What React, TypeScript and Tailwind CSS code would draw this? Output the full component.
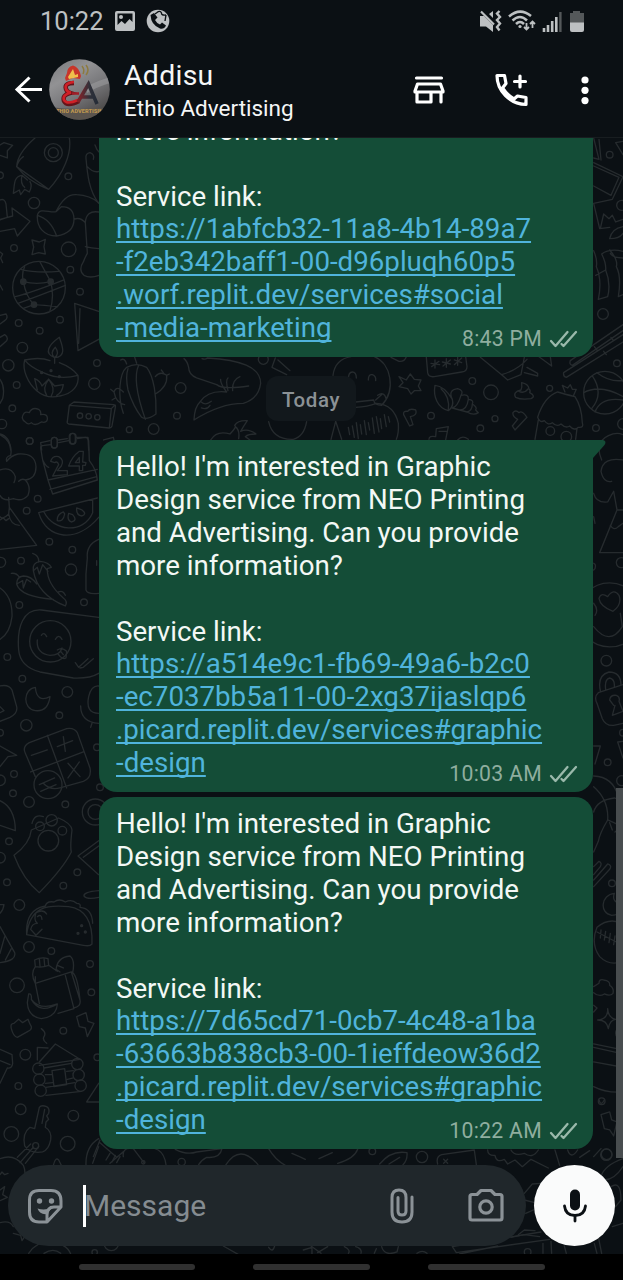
import React from "react";

function Wallpaper() {
  return (
    <svg
      className="pointer-events-none absolute inset-0"
      width="623"
      height="1116"
      viewBox="0 138 623 1116"
      fill="none"
      stroke="#262b2e"
      strokeWidth="4"
      strokeLinecap="round"
      strokeLinejoin="round"
      aria-hidden="true"
    >
      {/* upper left */}
      <g transform="translate(0 130) scale(.3333)">
        <path d="M0 45L12 38L38 46L22 62V84L0 76M50 110Q52 70 105 24M208 24C216 70 190 130 146 178Q85 155 50 110L146 178M50 110Q55 90 70 80" />
        <circle cx="160" cy="68" r="27" /><circle cx="160" cy="68" r="15" />
        <path d="M66 136C40 140 44 165 40 190L58 180L62 194L74 178L88 186Q98 168 90 155M66 136Q60 160 74 172M66 136L82 150" />
        <path d="M296 220C266 180 262 130 258 85Q256 70 270 68Q285 74 280 88M285 45Q290 60 297 66M262 110Q280 130 297 124" />
        <circle cx="205" cy="139" r="10" /><circle cx="102" cy="219" r="17" /><circle cx="0" cy="136" r="10" />
        <path d="M0 210Q14 204 18 222L22 262L0 270M38 258L36 234L90 274L52 318L44 296L0 304M38 258L0 268" />
        <path d="M168 245Q195 190 230 194Q270 196 296 218M112 256C118 230 150 250 168 245L184 230Q222 230 222 268Q222 310 170 318C130 318 110 290 112 256ZM112 256C140 264 160 290 170 318M222 268Q240 260 256 278M296 246Q258 240 256 278L262 370Q254 384 250 396Q234 420 252 436Q270 446 297 436M256 350Q274 354 296 356" />
        <path d="M96 330L118 336L136 328L132 350L136 372L116 368L96 374L101 351Z" />
        <circle cx="42" cy="354" r="10" /><circle cx="206" cy="358" r="22" /><circle cx="211" cy="419" r="10" /><circle cx="240" cy="485" r="10" />
        <circle cx="117" cy="473" r="79" />
        <path d="M62 418Q110 430 176 424M46 500Q90 490 192 450M54 520Q110 500 196 466M70 455Q110 465 152 455L120 396M70 455Q64 430 74 410M70 455Q78 500 102 524L70 535M102 524Q130 526 172 530M152 455Q164 500 150 542M0 366L8 372L2 384L8 398M0 465L8 480" />
        <circle cx="70" cy="455" r="8" fill="#262b2e" /><circle cx="152" cy="455" r="8" fill="#262b2e" /><circle cx="102" cy="524" r="8" fill="#262b2e" />
        <path d="M224 520L296 544M224 520L234 662L296 628M240 536L236 640M0 556L18 552Q26 564 14 572L0 582M0 622L14 614Q26 622 20 632L0 650" />
        <circle cx="56" cy="579" r="10" /><circle cx="119" cy="602" r="10" /><circle cx="180" cy="569" r="10" /><circle cx="67" cy="653" r="16" /><circle cx="25" cy="706" r="17" /><circle cx="291" cy="699" r="10" /><circle cx="283" cy="761" r="17" /><circle cx="50" cy="765" r="10" /><circle cx="37" cy="835" r="10" /><circle cx="6" cy="882" r="14" />
        <path d="M164 683C130 670 146 645 178 622C186 645 202 680 164 683ZM164 683Q148 670 166 652Q180 670 164 683M164 683V700M74 690Q120 680 150 692M178 698Q215 712 234 736M74 690C66 720 84 760 110 782Q140 808 180 798C220 790 238 766 234 736Q180 752 130 728Q90 712 74 690M104 746Q120 752 126 768L146 748L164 768L190 764Q186 790 170 796M104 746L112 780M146 748Q126 774 140 796M146 748Q168 776 154 798" />
        <circle cx="125" cy="728" r="3" fill="#262b2e" /><circle cx="153" cy="722" r="3" fill="#262b2e" /><circle cx="178" cy="740" r="3" fill="#262b2e" />
        <path d="M208 826L222 816L342 824Q348 824 346 832L336 888Q334 894 328 894L206 882Q200 880 202 874ZM208 826L334 836L328 894M334 836L344 826" />
        <circle cx="240" cy="857" r="8" /><circle cx="266" cy="859" r="8" /><circle cx="292" cy="862" r="8" />
        <path d="M76 876Q60 866 72 850Q78 844 88 848Q96 830 116 838Q124 844 122 854Q144 850 142 868Q140 880 124 876Q104 890 94 878Q86 886 76 876M0 748Q16 770 8 806L0 820M0 912Q30 920 32 960" />
        <circle cx="89" cy="933" r="10" />
        <path d="M370 850C352 800 358 730 380 712Q410 696 440 712C462 740 470 800 468 852Q440 872 425 862Q400 830 384 780Q376 740 384 716M436 868C412 800 400 740 416 706M362 690Q374 682 380 702M404 682L410 700M466 740Q480 722 500 736Q504 770 466 792M500 736L508 732M490 728L484 720M370 786Q350 764 342 786Q348 820 374 824M342 786L332 778M346 804L336 810" />
        <circle cx="542" cy="774" r="16" /><circle cx="531" cy="857" r="10" /><circle cx="461" cy="897" r="16" /><circle cx="388" cy="899" r="9" /><circle cx="790" cy="688" r="15" />
        <path d="M552 686Q562 694 566 712Q566 734 590 744L650 764Q670 780 746 768M606 686Q616 690 622 684C720 690 782 710 782 760Q776 806 730 820Q660 820 582 870Q584 830 600 816Q624 780 680 786Q660 760 662 748M684 782Q676 750 684 744M698 782Q696 750 720 740M604 816Q616 828 634 814M604 834Q622 840 630 826M826 684L816 712L860 734M834 690L870 722" />
        <path d="M806 875Q818 930 880 928Q912 920 920 875M632 930Q650 900 690 912Q712 890 704 886Q714 870 742 872Q730 890 722 904Q744 894 768 912Q744 912 736 920L750 930M706 890Q720 900 716 926" />
        <path d="M125 960L122 938L150 932M176 930L202 926M228 922L264 922L266 960M311 930L340 922L342 930" />
        <rect x="154" y="922" width="18" height="32" rx="9" /><rect x="208" y="910" width="18" height="32" rx="9" />
      </g>

      {/* gap between the first two messages, right part */}
      <g transform="translate(311 320) scale(.3333)">
        <path d="M66 166Q72 118 120 110M190 110C240 130 256 210 212 256Q190 256 188 240L134 246M200 226Q220 212 226 238M194 240L214 222M112 178Q112 156 124 156Q136 156 136 174M172 180Q172 162 184 164Q196 168 194 182M134 262Q170 260 196 250Q250 254 262 310Q264 340 256 358M60 358L74 304L92 358" />
        <path d="M112 322L116 344M124 318L130 352M136 308L142 356M148 314L152 342M160 302L166 344M172 308L176 330M184 294L190 340M196 290L204 336M208 296L212 326M220 284L226 320M232 290L236 306" />
        <path d="M264 170L286 180L298 162L310 178L330 180L322 198L330 212L310 212L300 222L290 206L264 200L276 188ZM240 112L264 124Q280 126 286 110" />
        <path d="M346 112L350 158Q352 172 370 170L452 156Q468 154 468 140L464 110M360 130L386 134M372 120V144M362 140L384 124M394 126L418 132M406 116V142M396 138L418 120M430 120L452 128M440 112V136M430 134L452 114" />
        <path d="M508 112L572 164L590 180L630 164L640 112M572 164Q620 150 648 118M648 142L680 160V168L640 158M684 110L722 138L718 110" />
        <circle cx="484" cy="183" r="10" /><circle cx="540" cy="217" r="22" /><circle cx="716" cy="205" r="9" /><circle cx="360" cy="287" r="10" /><circle cx="552" cy="296" r="9" /><circle cx="508" cy="325" r="10" /><circle cx="855" cy="324" r="10" /><circle cx="918" cy="130" r="10" />
        <path d="M614 232Q604 216 630 210Q634 202 632 188Q652 192 654 206Q660 212 656 218Q676 228 660 236Q630 240 614 232M624 214Q640 222 652 206" />
        <path d="M372 196C366 230 380 264 412 272Q430 258 424 238Q400 198 372 196ZM390 206Q418 230 412 272M424 238Q410 210 440 206Q460 212 450 226Q440 260 424 264M450 226Q474 220 472 238Q468 270 446 270M472 238Q490 240 484 252Q484 272 468 276M484 252Q500 262 494 270L502 278Q488 288 468 276L446 270L424 264" />
        <path d="M278 284Q276 272 290 274Q296 264 314 270Q320 286 298 290L306 314L296 318ZM606 278Q614 268 624 278Q634 270 648 292L612 330L604 318L620 298Q604 290 606 278M376 326L412 320L404 360M384 334L406 334M376 326L374 350Q354 346 354 358M440 360Q454 344 472 358" />
        <path d="M740 216Q700 230 680 292Q686 310 700 302Q712 318 724 308Q736 322 750 312Q764 326 776 318Q790 334 802 322Q820 324 814 308Q812 260 792 230M740 216Q760 222 792 230M762 216L754 196L770 204L778 194L784 208L796 208L788 226M682 300L672 358M798 326L794 358" />
        <circle cx="718" cy="333" r="13" /><circle cx="766" cy="350" r="16" />
        <path d="M778 122L936 14M784 136L936 32M758 158L936 44M766 172L936 66M778 122Q774 134 784 136M758 158Q756 170 766 172M850 80L858 90M878 94L886 104M900 52L908 62" />
        <circle cx="882" cy="218" r="64" /><path d="M844 168Q880 220 842 266M818 218Q870 190 944 234M858 158Q900 190 944 180M852 276Q870 230 936 240" />
      </g>

      {/* right edge, upper */}
      <g transform="translate(573 130) scale(.3333)">
        <path d="M62 24L78 88L62 84M78 28L84 90M62 98L150 140L118 208L62 220M62 168L114 196L138 142L62 108M150 34L128 38L150 74M62 220L80 296L110 292M82 296L92 252L108 266L118 256L128 276L150 268M110 326Q116 296 150 290M110 326Q140 326 150 310M86 372Q110 354 150 364M62 362Q74 390 70 410Q88 450 76 508L104 500Q114 460 98 420Q100 400 86 372M98 420L68 436M110 360Q136 390 130 410Q146 440 136 500L150 494M150 384Q120 384 112 370" />
        <circle cx="110" cy="74" r="10" /><circle cx="146" cy="226" r="15" /><circle cx="90" cy="552" r="16" /><circle cx="150" cy="882" r="16" />
        <path d="M86 990Q60 930 120 912Q136 908 150 914M150 990Q90 980 84 1024Q92 1060 116 1054M62 1090Q70 1120 104 1116L122 1084L132 1140H150M132 1140L80 1268H150M112 1186Q122 1204 136 1190L150 1180M62 1160L66 1180M62 1300Q70 1302 66 1316L62 1320" />
        <circle cx="110" cy="1455" r="96" /><path d="M62 1420Q78 1440 66 1456M120 1444Q82 1430 78 1406Q82 1386 104 1400Q122 1374 138 1396Q148 1424 120 1444M62 1490Q110 1550 148 1490L142 1450" /><circle cx="145" cy="1298" r="15" />
      </g>

      {/* right edge, lower */}
      <g transform="translate(573 640) scale(.3333)">
        <circle cx="100" cy="62" r="16" /><circle cx="150" cy="278" r="10" /><circle cx="104" cy="367" r="10" /><circle cx="146" cy="422" r="15" /><circle cx="117" cy="730" r="10" /><circle cx="86" cy="1384" r="10" /><circle cx="101" cy="1543" r="16" /><circle cx="146" cy="652" r="15" /><circle cx="146" cy="1180" r="18" />
        <path d="M82 152Q72 106 108 96Q144 96 144 136M98 148Q94 118 110 114Q126 118 124 140M76 158L150 134M76 158Q62 170 72 190L88 236Q98 258 122 256L150 250M122 196L110 180Q112 164 130 166Q142 170 138 184L150 214L118 226L126 196M62 318H82L66 372M150 304L134 306L150 354M62 408Q120 410 136 470M62 440Q108 480 104 540L150 560M104 540Q80 580 76 604L62 636M62 516Q72 480 124 474L150 484M110 548L118 570M126 550L150 556L126 576M62 680L78 664Q88 668 82 680L62 704M62 720L104 672Q118 676 110 688L62 740M124 760C84 764 78 820 116 826Q140 826 150 804M124 760Q114 790 150 790" />
        <path d="M72 862Q110 830 150 852M72 862Q52 910 80 950Q110 980 150 964M72 876L130 906M84 870L82 894M98 874L94 900M112 880L108 908M126 888L122 914M150 890L136 950M62 1040L78 1030Q78 1016 92 1020Q112 1022 110 1036Q124 1044 120 1060Q112 1070 94 1062Q78 1072 62 1058M62 1096L72 1104L62 1116M104 1106Q106 1138 74 1140Q102 1140 106 1166Q110 1140 128 1138Q106 1134 104 1106M62 1212L150 1230M62 1222L150 1242M62 1266L150 1282M62 1340Q100 1360 150 1356M84 1424L110 1416L116 1440L132 1446L122 1488L110 1470L94 1466ZM62 1550L84 1526" />
      </g>

      {/* left edge, middle */}
      <g transform="translate(0 430) scale(.3333)">
        <path d="M0 14Q40 36 32 76Q16 80 20 94Q34 76 54 72Q106 68 108 110Q108 146 76 150Q94 170 84 196Q66 216 40 206Q10 216 0 196M0 120Q34 108 46 140Q46 150 42 158M76 150Q66 144 56 154M26 202L28 232L110 346L0 358M28 232L26 252Q8 270 0 260M26 252Q32 286 58 286M0 270L10 264L18 272L26 266" />
        <path d="M128 90L122 54Q122 46 132 46L152 44M176 38L206 32M232 26L256 22Q264 22 266 32L268 92Q290 120 292 150L158 192L144 150L292 118M128 90L144 150M150 178L290 140M128 90Q138 110 146 112" />
        <rect x="154" y="22" width="18" height="32" rx="9" /><rect x="210" y="10" width="18" height="32" rx="9" />
        <path d="M152 94Q158 76 176 80Q194 90 184 108L172 122L202 122V134L158 138L176 104Q172 92 164 98ZM238 64L250 64L248 96L258 98L256 106H248V122H238V108H206Q216 80 238 64M226 98H238V82Z" />
        <circle cx="89" cy="33" r="10" /><circle cx="113" cy="206" r="10" /><circle cx="80" cy="242" r="10" /><circle cx="148" cy="335" r="10" /><circle cx="217" cy="359" r="10" /><circle cx="63" cy="392" r="10" /><circle cx="2" cy="397" r="15" /><circle cx="213" cy="419" r="17" /><circle cx="252" cy="517" r="10" /><circle cx="58" cy="525" r="10" />
        <path d="M116 248L292 204M116 248C140 330 230 340 296 262M132 246C160 304 250 314 278 248V208M190 246Q170 254 172 272Q190 276 194 252ZM206 250Q200 270 214 276Q234 272 218 254ZM230 234Q228 256 246 258Q262 252 246 240Z" />
        <path d="M98 370Q118 376 116 396M100 422Q96 398 120 394Q146 396 154 412L142 416Q140 460 190 504Q204 514 196 528C150 510 110 480 100 422ZM100 422L112 412L118 432L128 404L144 424M34 430Q50 428 58 442M50 462Q50 440 70 438Q94 438 110 462M50 462Q60 500 160 508M50 462L68 452L70 474L80 448L92 456M176 486Q190 480 196 496M296 328Q258 344 262 384Q256 430 258 480Q262 494 296 490M290 392V406" />
        <path d="M0 474Q38 500 36 560Q30 610 0 628M296 562L124 540C70 536 50 590 56 660Q60 710 120 726L220 744Q270 746 296 730M124 616Q132 604 140 620M166 628Q176 610 186 628M112 630Q108 670 150 676Q180 676 186 654M172 660Q186 650 200 664L198 684Q186 690 174 672M182 664L190 674M226 698L236 712L264 686M240 714L250 712L280 686" />
        <circle cx="151" cy="634" r="62" /><circle cx="22" cy="681" r="10" /><circle cx="67" cy="746" r="10" /><circle cx="202" cy="786" r="16" /><circle cx="178" cy="856" r="10" /><circle cx="79" cy="886" r="17" /><circle cx="0" cy="908" r="10" />
        <path d="M106 772C70 776 66 836 106 842Q144 846 150 800Q110 820 106 772ZM0 768Q26 762 36 780L50 830Q54 850 30 862L0 874M0 830L12 842L0 848M296 768Q274 766 266 800Q256 850 296 850M242 828Q242 876 296 880M276 880L272 892M0 948L50 976L24 980L0 1010" />
        <path d="M76 970Q66 950 88 938L200 896Q222 892 232 908L270 1014Q276 1044 250 1054L180 1074Q150 1082 130 1060M76 970L106 1040M142 916L200 1074M92 1026L250 966M94 976L142 960M190 920L196 964M172 950L218 932M204 1000L240 1040M238 996L204 1044M118 1064L164 1044M122 1084L168 1064" />
        <circle cx="144" cy="1064" r="42" /><circle cx="291" cy="952" r="10" /><circle cx="42" cy="1032" r="10" /><circle cx="0" cy="1051" r="16" /><circle cx="39" cy="1090" r="10" /><circle cx="87" cy="1116" r="16" /><circle cx="196" cy="1123" r="10" /><circle cx="300" cy="1072" r="10" />
      </g>

      {/* left edge, lower */}
      <g transform="translate(0 780) scale(.3333)">
        <path d="M0 62Q46 84 46 152L0 136M96 130Q104 100 130 110M176 114Q214 130 216 150Q210 200 214 216Q190 264 118 338Q70 300 42 226Q90 190 94 150Z" />
        <circle cx="120" cy="139" r="13" /><circle cx="155" cy="121" r="17" /><circle cx="187" cy="152" r="13" /><circle cx="145" cy="182" r="31" /><circle cx="286" cy="96" r="39" /><circle cx="286" cy="96" r="22" />
        <circle cx="27" cy="184" r="10" /><circle cx="0" cy="233" r="16" /><circle cx="21" cy="307" r="10" /><circle cx="58" cy="375" r="16" /><circle cx="232" cy="277" r="10" /><circle cx="190" cy="317" r="10" /><circle cx="87" cy="501" r="16" /><circle cx="154" cy="513" r="10" /><circle cx="270" cy="552" r="10" /><circle cx="51" cy="616" r="22" /><circle cx="274" cy="637" r="10" /><circle cx="190" cy="752" r="10" /><circle cx="76" cy="824" r="16" /><circle cx="292" cy="832" r="10" /><circle cx="55" cy="918" r="10" /><circle cx="62" cy="988" r="16" /><circle cx="220" cy="1007" r="16" /><circle cx="34" cy="1062" r="22" /><circle cx="203" cy="1091" r="22" />
        <path d="M296 182L234 228L296 284M296 198L250 232M296 332Q250 336 252 348Q262 360 296 352M0 374H12Q10 390 0 400M0 440L44 518Q50 542 0 548M0 520L14 470M16 540L34 506" />
        <path d="M80 464C90 380 140 374 206 380Q280 390 276 492Q270 500 250 496L80 464Q76 400 120 382L136 378Q140 362 162 366Q178 354 196 366Q216 356 230 370Q244 370 240 382Q276 384 278 430M108 398Q130 386 140 402M108 398Q100 420 112 430Q96 430 92 448L108 466L126 448M112 410Q124 400 126 418" />
        <circle cx="245" cy="437" r="3" fill="#262b2e" /><circle cx="234" cy="460" r="3" fill="#262b2e" /><circle cx="256" cy="456" r="3" fill="#262b2e" />
        <path d="M106 560L104 540Q124 530 144 536L146 556Q126 564 106 560M118 536L120 558M132 534L134 556M106 560Q90 580 106 610L118 670M172 574L146 556M106 610L214 576L240 660Q244 680 220 684M214 576Q232 580 240 660M106 610V590M174 700L222 686L196 586M168 572Q170 532 210 528Q226 540 218 578M172 556L190 564M180 576L168 568M86 642Q96 640 94 658Q120 692 172 672Q170 710 124 716Q84 710 82 668ZM94 658Q120 704 172 672" />
        <path d="M34 746Q30 730 42 730L56 718L68 728L84 718Q88 730 94 740Q96 750 84 754L52 772Q40 770 34 746M230 710L258 698L264 724L282 730L262 770L256 744L238 740ZM124 746Q140 758 132 770Q126 780 140 790M112 840V802L144 804M118 846L166 792L240 838L118 856M0 808L36 824L38 850Q36 866 22 864L0 910M0 842L30 854" />
        <circle cx="115" cy="866" r="17" /><circle cx="118" cy="899" r="17" /><circle cx="122" cy="932" r="17" /><circle cx="232" cy="852" r="17" /><circle cx="236" cy="885" r="17" /><circle cx="242" cy="917" r="17" />
        <path d="M132 864L214 850M136 884L156 884M200 874L220 872M136 910L158 908M202 898L220 894M138 922L224 908M138 946L244 934M156 872L194 866L200 914L162 920ZM296 910L260 966L296 966" />
        <path d="M118 982Q124 974 140 980Q150 986 146 1000L140 1008L146 1018L138 1026L136 1042Q156 1054 152 1080Q146 1110 128 1116Q90 1122 74 1098Q66 1060 90 1042L104 1046ZM134 988L126 1030M100 1102L60 1148M92 1092L52 1132M116 1100L76 1150" /><circle cx="107" cy="1097" r="9" />
        <path d="M0 1136Q42 1120 70 1156Q80 1180 70 1200M258 1156Q256 1100 296 1076M278 1150L296 1100M160 1156Q166 1130 176 1140L184 1156" />
      </g>

      {/* strip around the composer, left */}
      <g transform="translate(0 1140) scale(.3333)">
        <path d="M0 104L6 96L14 104L24 100M0 150L14 140L8 164L22 172L0 182M40 280L62 286L66 302L74 290M0 248Q30 240 40 260M86 340Q110 304 150 306Q200 310 212 342M132 340Q160 322 182 340" />
        <path d="M280 50L300 0M300 8L350 52Q400 10 330 70M318 60L330 40M336 66L346 46M350 68L360 50M370 50Q366 20 400 26L432 68M420 26Q490 10 498 74M526 28Q560 46 590 36L666 26Q660 56 620 52Q604 60 596 74M678 74Q720 10 774 74M806 26Q826 60 856 76M876 40Q900 50 916 58" />
        <circle cx="545" cy="66" r="11" /><circle cx="334" cy="310" r="22" /><circle cx="284" cy="337" r="8" /><circle cx="430" cy="67" r="5" />
        <path d="M670 318L716 344M806 322Q818 340 824 318M910 330L936 322V342" />
      </g>

      {/* strip around the composer, right */}
      <g transform="translate(311 1100) scale(.3333)">
        <circle cx="184" cy="154" r="10" /><circle cx="333" cy="171" r="17" /><circle cx="886" cy="164" r="17" /><circle cx="650" cy="456" r="10" />
        <path d="M24 176L64 158M80 190Q130 176 140 148M206 192Q240 150 288 158Q290 180 276 194M234 192L266 172M380 192Q374 170 392 164L490 150L496 194M398 178L410 190M410 178L398 190M530 150Q530 168 552 166Q556 190 580 178L590 192L612 180L634 200L660 178L712 204M600 150Q610 170 640 160Q664 178 682 150M732 150L746 196M770 150Q780 180 800 150M806 172L836 152" />
        <path d="M864 0Q870 20 880 0M870 230Q880 196 936 176M880 240Q910 240 936 200M900 260Q930 240 930 300L914 320M936 370L904 380M640 280L664 252L690 250M640 300L680 310M644 340L668 330M622 404L640 390L672 392M600 412L640 404L686 410" />
        <path d="M424 440L690 396M436 458L716 418M424 440L436 458M446 462L560 438M696 430V460M760 438L766 460M850 430L858 460M862 410L872 460M720 424L722 460M0 438L30 460M50 440L20 458M100 440Q120 450 112 460M134 440Q154 446 150 460M212 440Q220 470 258 456L262 440M318 460Q334 448 348 460M196 446L190 460" />
      </g>
    </svg>
  );
}

function Ticks() {
  return (
    <svg className="mt-[3px] ml-[7px] shrink-0" width="29" height="18" viewBox="0 0 29 18" fill="none" stroke="#9ab9ab" strokeWidth="2.3" strokeLinecap="round" strokeLinejoin="round">
      <path d="M2 11L6.500 16L18.500 2M12.500 14L14.500 16L27 2" />
    </svg>
  );
}

type Message = { text: string[]; link: string[]; time: string; tail?: boolean };

const graphicText = [
  "Hello! I'm interested in Graphic",
  "Design service from NEO Printing",
  "and Advertising. Can you provide",
  "more information?",
];

const messages: Message[] = [
  {
    text: ["more information?"],
    link: ["https://1abfcb32-11a8-4b14-89a7", "-f2eb342baff1-00-d96pluqh60p5", ".worf.replit.dev/services#social", "-media-marketing"],
    time: "8:43 PM",
  },
  {
    text: graphicText,
    link: ["https://a514e9c1-fb69-49a6-b2c0", "-ec7037bb5a11-00-2xg37ijaslqp6", ".picard.replit.dev/services#graphic", "-design"],
    time: "10:03 AM",
    tail: true,
  },
  {
    text: graphicText,
    link: ["https://7d65cd71-0cb7-4c48-a1ba", "-63663b838cb3-00-1ieffdeow36d2", ".picard.replit.dev/services#graphic", "-design"],
    time: "10:22 AM",
  },
];

function Bubble({ m }: { m: Message }) {
  const last = m.link.length - 1;
  return (
    <div className={`relative ml-[99px] w-[494px] shrink-0 rounded-[18px] bg-[#144d37] pt-[11px] pr-[15px] pb-3 pl-[17px] text-[27.7px] leading-[32.9px] text-[#f3f8f5] ${m.tail ? "rounded-tr-none" : ""}`}>
      {m.tail && (
        <svg className="absolute top-0 left-[493px]" width="15" height="20" viewBox="0 0 15 20" fill="#144d37">
          <path d="M0 0H11Q15 1 12.5 5L1 18H0Z" />
        </svg>
      )}
      {m.text.map((t) => (
        <p key={t} className="whitespace-nowrap">{t}</p>
      ))}
      <p className="mt-[32.900px] whitespace-nowrap">Service link:</p>
      {m.link.map((l, i) => (
        <div key={l} className="flex h-[32.900px] justify-between">
          <a className="whitespace-nowrap text-[#50b4dc] underline decoration-[1.5px] underline-offset-[2.5px] [text-decoration-skip-ink:none]">{l}</a>
          {i === last && (
            <span className="mt-[15px] flex text-[21.200px] leading-6 tracking-[0.3px] text-[#8fae9f]">
              {m.time}
              <Ticks />
            </span>
          )}
        </div>
      ))}
    </div>
  );
}

function StatusBar() {
  return (
    <div className="flex h-[42px] items-center pl-10 text-[25.5px] text-[#bdc0c2]">
      <span className="w-[63px] leading-[42px]">10:22</span>
      <svg className="ml-3" width="20" height="20" viewBox="0 0 20 20">
        <path fill="#bdc0c2" fillRule="evenodd" d="M2 0H18Q20 0 20 2V18Q20 20 18 20H2Q0 20 0 18V2Q0 0 2 0ZM2.5 2.5V14L6.5 10L10 13L14.5 8L17.5 11V2.5Z" />
        <circle cx="6" cy="6" r="2" fill="#bdc0c2" />
      </svg>
      <svg className="ml-[11px]" width="24" height="24" viewBox="0 0 24 24">
        <circle cx="12" cy="12" r="11.3" fill="#bdc0c2" />
        <path fill="#0b1014" d="M4.500 6L8 4L11.500 8.500L9 11Q10.500 14 14 15.500L16 13.500L20 16.500Q18 20.500 14 19.500Q5 16 4.500 6Z" />
        <path fill="none" stroke="#0b1014" strokeWidth="1.4" d="M11 3.500Q14 1 15.500 4Q15 6.500 20 6M11 3.500L9 5M20 6L19 12" />
      </svg>
      <svg className="ml-[309px]" width="106" height="24" viewBox="0 0 106 24" fill="none" stroke="#bdc0c2" strokeWidth="2.2">
        <path fill="#bdc0c2" stroke="none" d="M1 7H5L14 16V23L7 17.500H1ZM10 5L14 2V9Z" />
        <path d="M2 2.500L15 15.500" />
        <path strokeWidth="2.400" d="M20.500 2L18 4.500L21 8L18 11L21 14.500L18 18L20.500 21.500" />
        <path strokeWidth="2.500" d="M30 7.500Q41 -2 52 7M33.500 11.500Q41 4.500 48 11.500M37 15Q41 11 45 15" />
        <circle cx="41" cy="17.500" r="1.600" fill="#bdc0c2" stroke="none" />
        <path strokeWidth="1.800" d="M47.500 14V20.500M45 18L47.500 20.500L50 18M53.500 19V13M51 15L53.500 12.500L56 15" />
        <path strokeWidth="2.600" d="M65 19V23M69 16V23M73.200 12V23M77.300 8V23" />
        <path strokeWidth="2.400" stroke="#54585a" d="M81.400 3V23" />
        <path fill="#54585a" stroke="none" d="M91 4H94V2H101V4H105V14H91Z" />
        <path fill="#bdc0c2" stroke="none" d="M91 13.500H105V21Q105 23 103 23H93Q91 23 91 21Z" />
      </svg>
    </div>
  );
}

function Avatar() {
  return (
    <svg className="ml-[7px] shrink-0" width="61" height="61" viewBox="0 0 61 61">
      <defs>
        <clipPath id="face"><circle cx="30.500" cy="30.500" r="30.300" /></clipPath>
        <linearGradient id="steel" x1="0" y1="0" x2="0.600" y2="1">
          <stop offset="0" stopColor="#77777a" /><stop offset=".35" stopColor="#929294" /><stop offset=".65" stopColor="#77777a" /><stop offset="1" stopColor="#4c4a4a" />
        </linearGradient>
        <linearGradient id="letter" x1="0" y1="0" x2="1" y2="0">
          <stop offset="0" stopColor="#8a2228" /><stop offset=".6" stopColor="#30313a" /><stop offset="1" stopColor="#252c37" />
        </linearGradient>
      </defs>
      <g clipPath="url(#face)">
        <rect width="61" height="61" fill="url(#steel)" />
        <path d="M38 27Q48 22 61 18V24Q48 28 38 34Z" fill="#a2a2a3" opacity=".5" />
        <path d="M0 48Q30 52 61 48V61H0Z" fill="#5a544e" />
        <path d="M25 24Q15 24 17 30Q18 33 21 34Q13 36 15 42Q18 48 30 42" fill="none" stroke="#64141a" strokeWidth="4.500" />
        <path d="M25 23Q15 24 17 30Q18 33 22 33.500Q13 36 15 41Q18 46 29 41" fill="none" stroke="#cf2027" strokeWidth="2.600" />
        <path d="M23 34.500H30" stroke="#a01d27" strokeWidth="2.600" />
        <path d="M29 43L39.500 25L48 45M33 38H44" fill="none" stroke="url(#letter)" strokeWidth="3.600" />
        <path d="M18 14Q18 8 24 6.500Q30 8 32 17L31 20L24 19L17 22L16 19Z" fill="#c8352a" />
        <path d="M19 18L24 10L26 16L29 15V18L20 20Z" fill="#efc04c" />
        <path d="M33 7Q36 11 34 15M37 6Q41 11 37 16" fill="none" stroke="#8d7a3e" strokeWidth="1.500" />
        <text x="7" y="54" textLength="47" lengthAdjust="spacingAndGlyphs" fontFamily="Roboto, sans-serif" fontWeight="900" fontSize="5.800" fill="#bd9650">THIO ADVERTISIN</text>
      </g>
    </svg>
  );
}

function Header() {
  return (
    <header className="flex h-24 items-start border-b border-[#181d20] pt-[17px] pl-[14px]">
      <svg className="mt-[17px] shrink-0" width="28" height="27" viewBox="0 0 28 27" fill="none" stroke="#fff" strokeWidth="3">
        <path d="M28 13.500H3M15.500 1.500L3 13.500L15.500 25.500" />
      </svg>
      <Avatar />
      <div className="ml-[14px] w-[288px] text-[#f5f6f7]">
        <p className="text-[28.400px] leading-[33px] tracking-[0.3px]">Addisu</p>
        <p className="mt-[2px] text-[22.500px] leading-7">Ethio Advertising</p>
      </div>
      <svg className="mt-[16px] shrink-0" width="34" height="30" viewBox="0 0 34 30" fill="none" stroke="#fff" strokeWidth="3.200" strokeLinejoin="round" strokeLinecap="round">
        <path d="M4.500 3H29.500M5.500 9H28.500L31 16V17H3V16ZM5 17V27H19V17M29 17V27" />
      </svg>
      <svg className="mt-[14px] ml-[49px] shrink-0" width="33" height="34" viewBox="0 0 33 34" fill="none" stroke="#fff" strokeWidth="3.200" strokeLinejoin="round" strokeLinecap="round">
        <path d="M2 2.500H9.500L11 10.500L7.500 15Q12.500 22.500 19 26L22.500 23L31 24.500V31.500C15 31 2 18 2 2.500ZM25 3V14M19.500 8.500H30.500" />
      </svg>
      <svg className="mt-[17px] ml-[53px] shrink-0" width="8" height="30" viewBox="0 0 8 30" fill="#fff">
        <circle cx="4" cy="4" r="3.600" /><circle cx="4" cy="14.300" r="3.600" /><circle cx="4" cy="24.600" r="3.600" />
      </svg>
    </header>
  );
}

function Composer() {
  return (
    <div className="relative mt-4 mb-2 flex h-[81px] shrink-0 gap-2 pl-2">
      <div className="flex w-[518px] items-center rounded-full bg-[#20272b] pl-[19px] text-[#8b9297]">
        <svg width="36" height="36" viewBox="0 0 36 36" fill="none" stroke="currentColor" strokeWidth="3" strokeLinejoin="round">
          <path d="M12 2.500H24Q34 2.500 34 13V19L20 34H12Q2.500 34 2.500 24V12Q2.500 2.500 12 2.500ZM34 19H27Q20 19 20 27V34" />
          <circle cx="12.500" cy="13" r="2.700" fill="currentColor" stroke="none" /><circle cx="24.500" cy="13" r="2.700" fill="currentColor" stroke="none" />
          <path d="M10.500 20.500Q18 23 25 19.500L20 26Q13 27 10.500 20.500Z" fill="currentColor" stroke="none" />
        </svg>
        <span className="ml-5 h-[42px] w-[3px] bg-white" />
        <span className="-ml-[2px] flex-1 text-[30px] leading-[34px] text-[#858c91]">Message</span>
        <svg width="24" height="36" viewBox="0 0 24 36" fill="none" stroke="currentColor" strokeWidth="3" strokeLinecap="round">
          <path d="M22 9V24Q22 34 12 34Q2 34 2 24V9.500Q2 2 9 2Q16 2 16 9.500V23Q16 27 12 27Q8 27 8 23V9.500" />
        </svg>
        <svg className="mr-[22px] mb-[2px] ml-[54px]" width="36" height="34" viewBox="0 0 36 34" fill="none" stroke="currentColor" strokeWidth="3.200" strokeLinejoin="round">
          <path d="M4 6.500H9L13 2.500H23L27 6.500H32Q34 6.500 34 8.500V30Q34 32 32 32H4Q2 32 2 30V8.500Q2 6.500 4 6.500Z" />
          <circle cx="18" cy="19" r="6.200" />
        </svg>
      </div>
      <div className="flex w-[81px] items-center justify-center rounded-full bg-[#fafbfb]">
        <svg width="26" height="34" viewBox="0 0 26 34" fill="none" stroke="#0b1014" strokeWidth="2.800" strokeLinecap="round">
          <rect x="8" y="0.500" width="10" height="21" rx="5" fill="#0b1014" stroke="none" />
          <path d="M2.500 17Q3.500 26.500 13 26.500Q22.500 26.500 23.500 17M13 27V32" />
        </svg>
      </div>
    </div>
  );
}

export default function App() {
  return (
    <div className="flex h-[1280px] w-[623px] flex-col overflow-hidden bg-[#0b1014] font-[Roboto,sans-serif]">
      <StatusBar />
      <Header />
      <main className="relative flex h-[1116px] flex-col justify-end overflow-hidden">
        <Wallpaper />
        <Bubble m={messages[0]} />
        <div className="relative mt-[19px] mb-[19px] ml-[266px] flex h-[45px] w-[90px] shrink-0 items-center justify-center rounded-xl bg-[#12181c] pt-[3px] text-[20.500px] font-medium tracking-[0.6px] text-[#8b9195]">
          Today
        </div>
        <Bubble m={messages[1]} />
        <div className="h-[5px] shrink-0" />
        <Bubble m={messages[2]} />
        <Composer />
        <div className="absolute top-[650px] right-0 h-[370px] w-[7px] bg-[#484d4f]" />
      </main>
      <nav className="flex h-[26px] items-center gap-[58px] bg-black pl-[79px]">
        <span className="h-[6px] w-[116px] rounded-full bg-[#303030]" />
        <span className="h-[6px] w-[117px] rounded-full bg-[#303030]" />
        <span className="h-[6px] w-[117px] rounded-full bg-[#303030]" />
      </nav>
    </div>
  );
}
